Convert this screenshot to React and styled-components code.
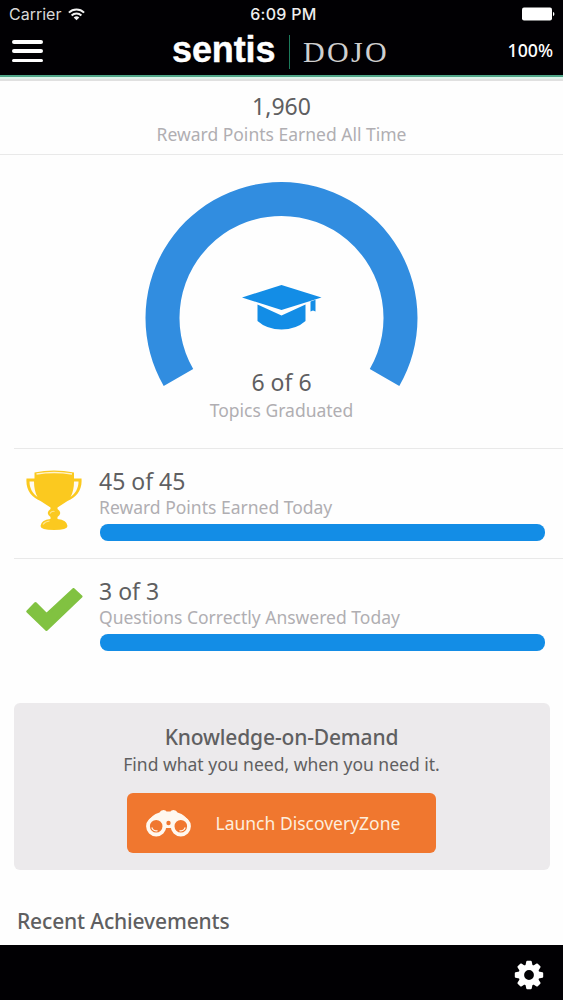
import React from "react";
import styled, { createGlobalStyle } from "styled-components";

const GlobalStyle = createGlobalStyle`
  * {
    box-sizing: border-box;
  }
  body {
    margin: 0;
    background: #fefefe;
    font-family: "Noto Sans", "Open Sans", sans-serif;
  }
`;

const Screen = styled.div`
  width: 563px;
  height: 1000px;
  display: flex;
  flex-direction: column;
  overflow: hidden;
  background: #fefefe;
`;

const Header = styled.header`
  height: 77px;
  flex-shrink: 0;
  background: #010003;
  border-bottom: 2px solid #4fa688;
  color: #fff;
`;

const StatusBar = styled.div`
  height: 28px;
  display: grid;
  grid-template-columns: 1fr auto 1fr;
  align-items: center;
  padding: 0 8px 0 9px;
  font-family: Inter, sans-serif;
  font-size: 16px;
  line-height: 28px;
`;

const Carrier = styled.div`
  display: flex;
  align-items: center;
  gap: 7px;
  color: #d8d8d8;
`;

const Clock = styled.div`
  font-weight: 500;
  color: #eee;
  padding-left: 3px;
  letter-spacing: 0.3px;
`;

const BatteryIcon = styled.svg`
  justify-self: end;
`;

const NavBar = styled.div`
  height: 47px;
  display: grid;
  grid-template-columns: 1fr auto 1fr;
  align-items: center;
  padding: 0 10px 0 12px;
`;

const MenuButton = styled.div`
  width: 31px;
  height: 22px;
  display: flex;
  flex-direction: column;
  justify-content: space-between;
  margin-top: -1px;

  span {
    height: 3.5px;
    border-radius: 2px;
    background: #fff;
  }
`;

const Brand = styled.div`
  display: flex;
  align-items: center;
  width: 214px;
  height: 47px;
  margin-right: 7px;
`;

const Sentis = styled.span`
  width: 117px;
  flex-shrink: 0;
  font-family: "Liberation Sans", Arial, sans-serif;
  font-weight: 700;
  font-size: 36px;
  line-height: 40px;
  letter-spacing: -0.1px;
  margin-top: -3px;
  -webkit-text-stroke: 0.4px #fff;
`;

const BrandDivider = styled.span`
  width: 1px;
  flex-shrink: 0;
  height: 34px;
  margin-right: 13px;
  background: #1c7a5b;
`;

const Dojo = styled.span`
  font-family: "Liberation Serif", serif;
  font-size: 30px;
  line-height: 40px;
  letter-spacing: 2.3px;
  color: #cfcfcf;
`;

const Percent = styled.div`
  justify-self: end;
  font-size: 17.7px;
  font-weight: 500;
  line-height: 24px;
  margin-top: -4px;
`;

const Total = styled.section`
  height: 78px;
  flex-shrink: 0;
  padding-top: 12px;
  text-align: center;
  border-top: 2px solid #def3eb;
  border-bottom: 1px solid #e9e9e9;
  box-shadow: inset 0 2px 0 #e0e0e0;
`;

const Value = styled.div`
  font-size: 23px;
  line-height: ${(p) => p.$line || 30}px;
  color: #5f5f61;
`;

const Label = styled.div`
  font-size: 17.5px;
  line-height: 24px;
  color: #b0aeb2;
  white-space: nowrap;
`;

const TotalValue = styled(Value)`
  padding: 1px 0 2px;
`;

const Gauge = styled.section`
  height: 293px;
  flex-shrink: 0;
  display: flex;
  flex-direction: column;
  align-items: center;
  padding-top: 25px;
`;

const GaugeText = styled.div`
  margin-top: -19px;
  text-align: center;
`;

const GaugeValue = styled(Value)`
  padding-bottom: 1px;
`;

const Row = styled.section`
  height: 110px;
  flex-shrink: 0;
  display: flex;
  margin-left: 14px;
  padding: 18px 18px 0 11px;
  border-top: 1px solid #e9e9e9;
`;

const RowIcon = styled.div`
  width: 74px;
  flex-shrink: 0;
  padding-top: ${(p) => p.$top}px;
`;

const RowBody = styled.div`
  flex: 1;
  min-width: 0;
`;

const Bar = styled.div`
  height: 17px;
  margin: 5px 0 0 1px;
  border-radius: 8px;
  background: #138de6;
`;

const Card = styled.section`
  height: 167px;
  flex-shrink: 0;
  margin: 35px 13px 0 14px;
  display: flex;
  flex-direction: column;
  align-items: center;
  padding: 20px 2px 0 0;
  border-radius: 6px;
  background: #eceaec;
  color: #5f5f61;
`;

const CardTitle = styled.h2`
  margin: 0;
  padding-left: 1px;
  font-size: 21px;
  line-height: 29px;
  font-weight: 500;
  letter-spacing: -0.15px;
`;

const CardText = styled.p`
  margin: 0;
  padding-left: 1px;
  font-size: 17.5px;
  line-height: 25px;
`;

const LaunchButton = styled.button`
  width: 309px;
  height: 60px;
  margin-top: 16px;
  padding: 0 0 0 19px;
  display: flex;
  align-items: center;
  gap: 25px;
  border: 0;
  border-radius: 6px;
  background: #f0772f;
  color: #fdeedd;
  font-family: inherit;
  font-size: 17.5px;
`;

const SectionTitle = styled.h2`
  margin: 35px 0 0 17px;
  flex: 1;
  font-size: 21px;
  line-height: 32px;
  font-weight: 500;
  letter-spacing: -0.15px;
  color: #5f5f61;
`;

const Footer = styled.footer`
  height: 55px;
  flex-shrink: 0;
  display: flex;
  align-items: center;
  justify-content: flex-end;
  padding: 5px 19px 0 0;
  background: #010003;
`;

const Wifi = () => (
  <svg width="17" height="13" viewBox="0 0 17 13" fill="none" stroke="#f2f2f2" strokeWidth="2">
    <path d="M.9 4.6a10.8 10.8 0 0 1 15.2 0" />
    <path d="M3.6 7.5a7 7 0 0 1 9.8 0" />
    <path d="M8.5 12.3 5.7 9.5a4 4 0 0 1 5.6 0Z" fill="#f2f2f2" stroke="none" />
  </svg>
);

const Battery = () => (
  <BatteryIcon width="34" height="14" viewBox="0 0 34 14" fill="#fff">
    <rect x="1" y="0.5" width="30" height="13" rx="2" />
    <path d="M32 4.8c1.9.8 1.9 3.6 0 4.4Z" />
  </BatteryIcon>
);

const GaugeArc = () => (
  <svg width="273" height="206" viewBox="0 0 273 206">
    <path
      d="M18.7 206 A136 136 0 1 1 254.3 206 L224.8 189 A102 102 0 1 0 48.2 189 Z"
      fill="#318de0"
    />
    <g fill="#138de6">
      <path d="M136.5 105 L176.5 117.5 L136.5 130 L97 117.5 Z" />
      <path d="M112.5 124.5 L136.5 135.500 L160.5 124.5 V141 Q151 149.5 136.5 149.5 Q122 149.5 112.5 141 Z" />
      <path d="M165.5 121.5 L170.5 119.8 V131.5 L168 130.6 L165.5 131.5 Z" />
    </g>
  </svg>
);

const Trophy = () => (
  <svg width="58" height="62" viewBox="0.5 0 58 62">
    <path
      d="M10 2.5Q29 -1.5 49.5 2.5V8.5H57C58 20 52 27 43 31L33 37.5V39Q38.5 43 33 47V49Q42.5 50 43 56Q43 60 29.5 60Q16 60 16 56Q16.5 50 26 49V47Q20.5 43 26 39V37.5L16 31C7 27 1 20 2 8.5H10Z"
      fill="#fbc91f"
    />
    <path
      d="M5 11.5H9.5Q9.5 21 13 27C8 23.5 5 18 5 11.5ZM54 11.5H49.5Q49.5 21 46 27C51 23.5 54 18 54 11.5Z"
      fill="#fffaf0"
    />
    <path d="M12 4Q29.5 1 47.5 4" fill="none" stroke="#fff3cc" strokeWidth="1.5" />
    <path d="M25.5 43.5Q27 40.5 30 41.5M18.5 54.5Q20.5 51.5 25 51" fill="none" stroke="#fde794" strokeWidth="1.2" />
  </svg>
);

const Check = () => (
  <svg width="58" height="46" viewBox="0 0 58 46">
    <path
      d="M2.8 23.5 L21.5 41.5 L56 8.5 L48.5 1.5 L21.5 26.5 L10.5 15.5 Z"
      fill="#81c241"
      stroke="#81c241"
      strokeWidth="3"
      strokeLinejoin="round"
    />
  </svg>
);

const Binoculars = () => (
  <svg width="45" height="27" viewBox="0 0 45 27">
    <path
      d="M1 13Q5 5 13.5 2.5Q14.5 0 17.5 0Q20 0 20.5 1.5H24.5Q25 0 27.5 0Q30.5 0 31.5 2.5Q40 5 44 13L35 19H28L24.5 18H20.5L17 19H10Z"
      fill="#fff8ef"
    />
    <g fill="#f0772f" stroke="#fff8ef" strokeWidth="3.8">
      <circle cx="10.2" cy="16.3" r="8.2" />
      <circle cx="34.8" cy="16.3" r="8.2" />
    </g>
    <g fill="none" stroke="#fff8ef" strokeWidth="1.2">
      <path d="M5.8 17.5A4.8 4.8 0 0 0 11.5 20.7" />
      <path d="M39.2 17.5A4.8 4.8 0 0 1 33.5 20.7" />
    </g>
    <circle cx="22.5" cy="13" r="2.2" fill="#f0772f" />
  </svg>
);

const Gear = () => (
  <svg width="30" height="30" viewBox="-15 -15 30 30">
    <circle r="7.7" fill="none" stroke="#fff" strokeWidth="5.6" />
    {[0, 45, 90, 135, 180, 225, 270, 315].map((angle) => (
      <path
        key={angle}
        transform={`rotate(${angle})`}
        d="M-3.8 -8.5L-2.7 -13.4Q-2.6 -14.2 -1.8 -14.2H1.8Q2.6 -14.2 2.7 -13.4L3.8 -8.5Z"
        fill="#fff"
      />
    ))}
  </svg>
);

const App = () => {
  return (
    <Screen>
      <GlobalStyle />
      <Header>
        <StatusBar>
          <Carrier>
            Carrier
            <Wifi />
          </Carrier>
          <Clock>6:09 PM</Clock>
          <Battery />
        </StatusBar>
        <NavBar>
          <MenuButton>
            <span />
            <span />
            <span />
          </MenuButton>
          <Brand>
            <Sentis>sentis</Sentis>
            <BrandDivider />
            <Dojo>DOJO</Dojo>
          </Brand>
          <Percent>100%</Percent>
        </NavBar>
      </Header>

      <Total>
        <TotalValue $line={28}>1,960</TotalValue>
        <Label>Reward Points Earned All Time</Label>
      </Total>

      <Gauge>
        <GaugeArc />
        <GaugeText>
          <GaugeValue>6 of 6</GaugeValue>
          <Label>Topics Graduated</Label>
        </GaugeText>
      </Gauge>

      <Row>
        <RowIcon $top={3}>
          <Trophy />
        </RowIcon>
        <RowBody>
          <Value $line={28}>45 of 45</Value>
          <Label>Reward Points Earned Today</Label>
          <Bar />
        </RowBody>
      </Row>
      <Row>
        <RowIcon $top={11}>
          <Check />
        </RowIcon>
        <RowBody>
          <Value $line={28}>3 of 3</Value>
          <Label>Questions Correctly Answered Today</Label>
          <Bar />
        </RowBody>
      </Row>

      <Card>
        <CardTitle>Knowledge-on-Demand</CardTitle>
        <CardText>Find what you need, when you need it.</CardText>
        <LaunchButton>
          <Binoculars />
          Launch DiscoveryZone
        </LaunchButton>
      </Card>

      <SectionTitle>Recent Achievements</SectionTitle>

      <Footer>
        <Gear />
      </Footer>
    </Screen>
  );
};

export default App;
